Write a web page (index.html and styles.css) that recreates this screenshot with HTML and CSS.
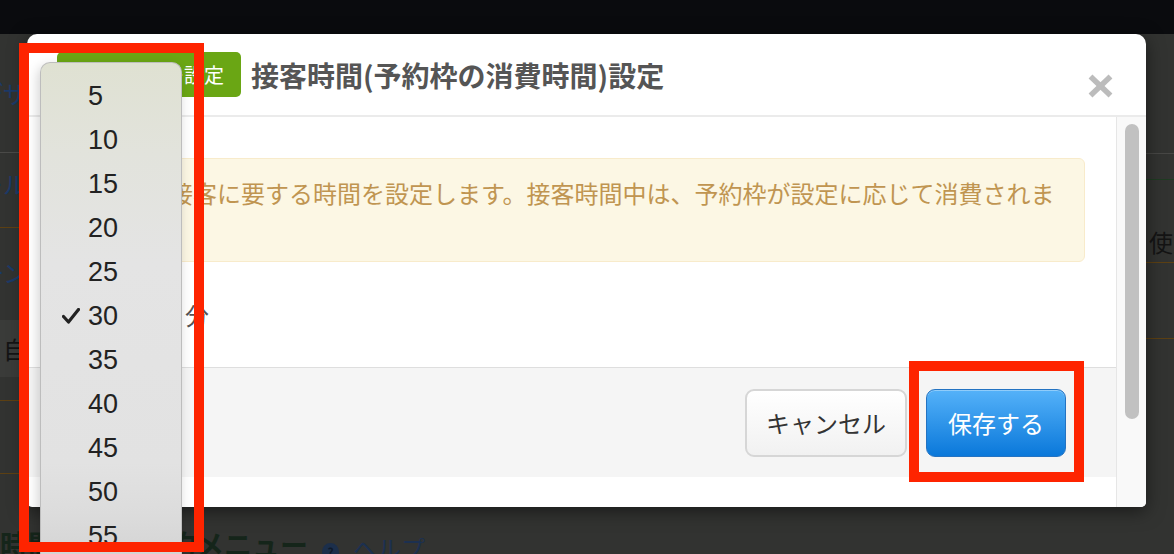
FILE: index.html
```html
<!DOCTYPE html>
<html lang="ja">
<head>
<meta charset="utf-8">
<title>接客時間設定</title>
<link rel="stylesheet" href="styles.css">
</head>
<body>
<div class="page">
  <div class="topbar"></div>
  <div class="mid">
    <div class="side side-left">
      <div class="srow l1"><span class="blue">デザ</span></div>
      <div class="srow l2 brown"><span class="blue">ール</span></div>
      <div class="srow l3"><span class="blue">ーン</span></div>
      <div class="srow l4"><span class="dark">自</span></div>
      <div class="srow l5 brown"></div>
      <div class="srow l6 brown"></div>
      <div class="srow l7"></div>
    </div>
    <div class="center"></div>
    <div class="side side-right">
      <div class="srow r1"></div>
      <div class="srow r2"></div>
      <div class="srow r3 brown"><span class="dark">使用</span></div>
      <div class="srow r4 brown"></div>
      <div class="srow r5"></div>
    </div>
  </div>
  <div class="heading">時間帯別の予約メニュー<span class="help"><span class="help-icon">?</span>ヘルプ</span></div>
</div>

<div class="modal">
  <div class="modal-header">
    <span class="badge">予約メニュー設定</span>
    <h1 class="modal-title">接客時間(予約枠の消費時間)設定</h1>
    <svg class="close" width="25" height="24" viewBox="0 0 25 24">
      <line x1="2.5" y1="2.5" x2="22.5" y2="21.5" />
      <line x1="22.5" y1="2.5" x2="2.5" y2="21.5" />
    </svg>
  </div>
  <div class="modal-body">
    <div class="scroll-content">
      <div class="alert">予約毎の接客に要する時間を設定します。接客時間中は、予約枠が設定に応じて消費されます。</div>
      <div class="form-row">
        <div class="select">30</div>
        <span class="unit">分</span>
      </div>
      <div class="footer">
        <button class="btn btn-cancel">キャンセル</button>
        <button class="btn btn-save">保存する</button>
      </div>
    </div>
    <div class="scrollbar"><div class="thumb"></div></div>
  </div>
</div>

<div class="popup">
  <div class="opt"><span class="chk"></span><span>5</span></div>
  <div class="opt"><span class="chk"></span><span>10</span></div>
  <div class="opt"><span class="chk"></span><span>15</span></div>
  <div class="opt"><span class="chk"></span><span>20</span></div>
  <div class="opt"><span class="chk"></span><span>25</span></div>
  <div class="opt"><span class="chk"><svg width="18" height="16" viewBox="0 0 18 16"><polyline points="1.5,8.5 6.5,14 16.5,1.5" /></svg></span><span>30</span></div>
  <div class="opt"><span class="chk"></span><span>35</span></div>
  <div class="opt"><span class="chk"></span><span>40</span></div>
  <div class="opt"><span class="chk"></span><span>45</span></div>
  <div class="opt"><span class="chk"></span><span>50</span></div>
  <div class="opt"><span class="chk"></span><span>55</span></div>
</div>

<div class="mark mark-left"></div>
<div class="mark mark-right"></div>
</body>
</html>
```

FILE: styles.css
```css
* { box-sizing: border-box; }

html, body {
  margin: 0;
  padding: 0;
}

body {
  width: 1174px;
  height: 554px;
  overflow: hidden;
  background: #323331;
  font-family: "Noto Sans CJK JP", "Noto Sans", sans-serif;
  position: relative;
}

/* ---------- dimmed background page ---------- */
.page {
  display: flex;
  flex-direction: column;
  height: 554px;
  overflow: hidden;
}

.topbar {
  height: 34px;
  background: #0a0b0e;
  flex: none;
}

.mid {
  display: flex;
  height: 490px;
  flex: none;
}

.side {
  display: flex;
  flex-direction: column;
  overflow: hidden;
}

.side-left { width: 27px; }
.side-right { width: 28px; }
.center { flex: 1; }

.srow {
  display: flex;
  align-items: center;
  white-space: nowrap;
  font-size: 24px;
  border-bottom: 1px solid transparent;
  flex: none;
}

.side-left .srow { justify-content: flex-end; }
.side-right .srow { justify-content: flex-start; padding-left: 3px; }

.blue { color: #1c3a68; }
.dark { color: #141414; }

.brown { border-bottom-color: #5c4013; }

.l1 { height: 119px; border-bottom-color: #4a4a48; padding-bottom: 2px; }
.l2 { height: 75px; padding-bottom: 14px; }
.l3 { height: 92px; padding-bottom: 4px; }
.l4 { height: 57px; background: #3a3b39; }
.l5 { height: 24px; }
.l6 { height: 73px; }
.l7 { flex: 1; }

.r1 { height: 120px; border-bottom-color: #474745; }
.r2 { height: 26px; border-bottom-color: #1f3b22; }
.r3 { height: 83px; padding-top: 40px; }
.r4 { height: 76px; }
.r5 { flex: 1; }

.heading {
  height: 30px;
  line-height: 40px;
  font-size: 28px;
  font-weight: bold;
  color: #15251a;
  white-space: nowrap;
  display: flex;
  align-items: flex-start;
  overflow: hidden;
}

.help {
  display: inline-flex;
  align-items: center;
  margin-left: 14px;
  font-size: 24px;
  font-weight: normal;
  color: #1c3050;
  height: 40px;
  margin-top: 4px;
}

.help-icon {
  width: 17px;
  height: 17px;
  border-radius: 50%;
  background: #1c2f4b;
  color: #0f1a2a;
  font-size: 12px;
  line-height: 17px;
  text-align: center;
  margin-right: 14px;
  font-weight: bold;
  margin-top: 6px;
}

/* ---------- modal ---------- */
.modal {
  position: absolute;
  left: 27px;
  top: 34px;
  width: 1119px;
  height: 473px;
  background: #fff;
  border-radius: 10px 10px 5px 5px;
  box-shadow: 0 4px 18px rgba(0, 0, 0, 0.5);
  display: flex;
  flex-direction: column;
  overflow: hidden;
}

.modal-header {
  height: 83px;
  flex: none;
  border-bottom: 2px solid #ebebeb;
  display: flex;
  align-items: center;
  padding: 0 33px 0 30px;
}

.badge {
  width: 184px;
  height: 45px;
  flex: none;
  background: #6aa614;
  color: #fff;
  border-radius: 5px;
  font-size: 20px;
  display: flex;
  align-items: center;
  justify-content: flex-end;
  padding-right: 17px;
  overflow: hidden;
  white-space: nowrap;
}

.modal-title {
  flex: 1;
  margin: 0 0 0 10px;
  font-size: 28px;
  font-weight: bold;
  color: #555;
  white-space: nowrap;
}

.close {
  flex: none;
  margin-top: 22px;
}

.close line {
  stroke: #bcbcbc;
  stroke-width: 5.5;
}

.modal-body {
  flex: 1;
  display: flex;
  min-height: 0;
}

.scroll-content {
  flex: 1;
  display: flex;
  flex-direction: column;
}

.alert {
  margin: 41px 31px 0 30px;
  height: 104px;
  background: #fcf7e4;
  border: 1px solid #f8ebcb;
  border-radius: 6px;
  padding: 16px 15px;
  font-size: 24px;
  line-height: 35px;
  color: #c09551;
}

.form-row {
  height: 105px;
  display: flex;
  align-items: center;
  padding-left: 30px;
  flex: none;
}

.select {
  width: 118px;
  height: 46px;
  border: 1px solid #ccc;
  border-radius: 5px;
  font-size: 24px;
  line-height: 44px;
  padding-left: 12px;
  color: #333;
  margin-right: 10px;
}

.unit {
  font-size: 24px;
  color: #555;
}

.footer {
  height: 110px;
  flex: none;
  background: #f5f5f5;
  border-top: 1px solid #dedede;
  display: flex;
  align-items: center;
  justify-content: flex-end;
  padding-right: 50px;
}

.btn {
  height: 68px;
  border-radius: 9px;
  font-family: "Noto Sans CJK JP", "Noto Sans", sans-serif;
  font-size: 24px;
  padding: 0;
  cursor: pointer;
}

.btn-cancel {
  width: 162px;
  background: linear-gradient(#ffffff, #f1f1f1);
  border: 2px solid #d6d6d6;
  color: #333;
}

.btn-save {
  width: 140px;
  margin-left: 19px;
  background: linear-gradient(#55b2f9, #0a78da);
  border: 1px solid #2473c2;
  color: #fff;
  box-shadow: inset 0 1px 0 rgba(255, 255, 255, 0.35);
}

.scrollbar {
  width: 30px;
  flex: none;
  background: #f9f9f9;
  border-left: 1px solid #e6e6e6;
  padding: 7px 7px 0 8px;
}

.thumb {
  width: 14px;
  height: 295px;
  border-radius: 7px;
  background: #c1c1c1;
}

/* ---------- native select popup (continues past the window bottom) ---------- */
.popup {
  position: absolute;
  left: 40px;
  top: 62px;
  width: 142px;
  height: 492px;
  border-radius: 10px 10px 0 0;
  border: 1px solid #bdbdbd;
  border-bottom: none;
  background: linear-gradient(#dfe1d2 0px, #e2e3dc 90px, #e4e4e4 200px, #e2e2e2 400px, #dcdcdc 450px, #d4d4d4 492px);
  box-shadow: -2px 4px 12px rgba(0, 0, 0, 0.18);
  padding-top: 11px;
  overflow: hidden;
}

.opt {
  height: 44px;
  flex: none;
  display: grid;
  grid-template-columns: 47px 1fr;
  align-items: center;
  font-family: "Liberation Sans", Arial, sans-serif;
  font-size: 27px;
  color: #222;
}

.chk {
  display: flex;
  justify-content: flex-end;
  padding-right: 8px;
}

.chk polyline {
  fill: none;
  stroke: #222;
  stroke-width: 3.2;
  stroke-linecap: round;
  stroke-linejoin: round;
}

/* ---------- red annotation frames ---------- */
.mark {
  position: absolute;
  border: 10px solid #fe2400;
}

.mark-left {
  left: 19px;
  top: 43px;
  width: 185px;
  height: 509px;
}

.mark-right {
  left: 909px;
  top: 361px;
  width: 175px;
  height: 121px;
}
```
